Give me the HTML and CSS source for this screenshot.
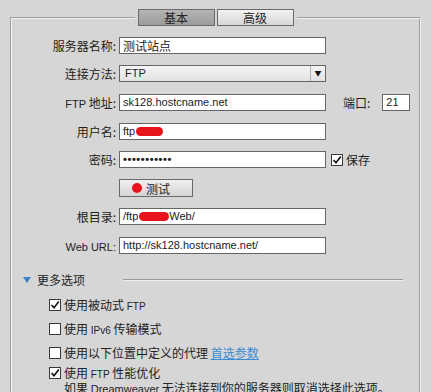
FILE: index.html
```html
<!DOCTYPE html>
<html lang="zh-CN">
<head>
  <meta charset="UTF-8">
  <title>站点设置 - 服务器</title>
  <link rel="stylesheet" href="styles.css">
</head>

<body>

  <fieldset class="panel">
    <legend class="tabs">
      <span class="tab active">基本</span>
      <span class="tab">高级</span>
    </legend>

    <div class="form">
      <div class="row">
        <label class="label">服务器名称:</label>
        <div class="field">测试站点</div>
      </div>

      <div class="row">
        <label class="label">连接方法:</label>
        <div class="field select">
          <span class="en">FTP</span>
          <span class="arrow">&#9660;</span>
        </div>
      </div>

      <div class="row">
        <label class="label"><span class="en">FTP</span> 地址:</label>
        <div class="field en">sk128.hostcname.net</div>
        <label class="port-label">端口:</label>
        <div class="field port en">21</div>
      </div>

      <div class="row">
        <label class="label">用户名:</label>
        <div class="field en">ftp<span class="scribble user"></span></div>
      </div>

      <div class="row">
        <label class="label">密码:</label>
        <div class="field dots">&bull;&bull;&bull;&bull;&bull;&bull;&bull;&bull;&bull;&bull;&bull;</div>
        <span class="check on save">
          <svg width="10" height="10" viewBox="0 0 10 10"><path d="M1.5 5 L4 7.8 L8.8 1.5" fill="none" stroke="#111" stroke-width="1.6"/></svg>
        </span>
        <span class="save-text">保存</span>
      </div>

      <div class="row">
        <span class="label"></span>
        <button class="test-btn"><span class="dot"></span>测试</button>
      </div>

      <div class="row">
        <label class="label">根目录:</label>
        <div class="field en">/ftp<span class="scribble root"></span>Web/</div>
      </div>

      <div class="row">
        <label class="label"><span class="en">Web URL:</span></label>
        <div class="field en">http://sk128.hostcname.net/</div>
      </div>
    </div>

    <div class="more">
      <span class="tri"></span>
      <span class="more-text">更多选项</span>
      <span class="rule"></span>
    </div>

    <div class="options">
      <div class="opt">
        <span class="check on">
          <svg width="10" height="10" viewBox="0 0 10 10"><path d="M1.5 5 L4 7.8 L8.8 1.5" fill="none" stroke="#111" stroke-width="1.6"/></svg>
        </span>
        <span>使用被动式 <span class="en small">FTP</span></span>
      </div>
      <div class="opt">
        <span class="check"></span>
        <span>使用 <span class="en small">IPv6</span> 传输模式</span>
      </div>
      <div class="opt">
        <span class="check"></span>
        <span>使用以下位置中定义的代理 <a href="#" class="link">首选参数</a></span>
      </div>
      <div class="opt last">
        <span class="check on">
          <svg width="10" height="10" viewBox="0 0 10 10"><path d="M1.5 5 L4 7.8 L8.8 1.5" fill="none" stroke="#111" stroke-width="1.6"/></svg>
        </span>
        <span>使用 <span class="en small">FTP</span> 性能优化<br>如果 <span class="en">Dreamweaver</span> 无法连接到你的服务器则取消选择此选项。</span>
      </div>
    </div>
  </fieldset>

</body>
</html>
```

FILE: styles.css
```css
body {
  margin: 0;
  font-family: 'Noto Sans CJK SC', 'Liberation Sans', sans-serif;
  font-size: 12px;
  color: #222;
  background-color: #d6d6d6;
  height: 392px;
  overflow: hidden;
}

.en {
  font-family: 'Liberation Sans', sans-serif;
  font-size: 11px;
}

.en.small {
  font-size: 10px;
}

.panel {
  margin: 9px 10px 0;
  padding: 0;
  border: 2px groove #f2f2f2;
  min-width: 0;
  height: 420px;
}

.tabs {
  margin: 0 auto;
  padding: 0 3px;
  display: flex;
  gap: 2px;
}

.tab {
  width: 77px;
  height: 17px;
  box-sizing: border-box;
  border: 1px solid #6a6a6a;
  background: linear-gradient(#f2f2f2, #d8d8d8);
  text-align: center;
  line-height: 15px;
}

.tab.active {
  background: linear-gradient(#b4b4b4, #9c9c9c);
}

.form {
  padding-top: 5px;
}

.row {
  display: flex;
  align-items: center;
  height: 28.6px;
}

.label {
  width: 104px;
  margin-right: 3px;
  text-align: right;
  white-space: nowrap;
}

.field {
  width: 207px;
  height: 17px;
  box-sizing: border-box;
  border: 1px solid #666;
  background: white;
  padding: 0 3px;
  line-height: 15px;
  white-space: nowrap;
  display: flex;
  align-items: center;
}

.select {
  background: linear-gradient(#f4f4f4, #e2e2e2);
  padding-left: 5px;
  position: relative;
}

.select .arrow {
  margin-left: auto;
  width: 14px;
  height: 15px;
  margin-right: -3px;
  border-left: 1px solid #b0b0b0;
  font-size: 7px;
  text-align: center;
  line-height: 15px;
  color: #111;
}

.port-label {
  margin-left: 17px;
  margin-right: 12px;
}

.field.port {
  width: 28px;
}

.dots {
  font-family: 'Liberation Sans', sans-serif;
  font-size: 11px;
  letter-spacing: 0.6px;
  font-weight: bold;
}

.scribble {
  display: inline-block;
  height: 9px;
  background: #e8141c;
  border-radius: 5px;
  vertical-align: middle;
}

.scribble.user {
  width: 27px;
  margin-left: 1px;
}

.scribble.root {
  width: 30px;
  margin-left: 1px;
}

.check {
  width: 12px;
  height: 12px;
  box-sizing: border-box;
  border: 1px solid #3a3a3a;
  background: white;
  display: inline-flex;
  align-items: center;
  justify-content: center;
  flex-shrink: 0;
}

.save {
  margin-left: 5px;
  margin-right: 3px;
}

.test-btn {
  width: 74px;
  height: 18px;
  padding: 0 0 0 12px;
  border: 1px solid #6a6a6a;
  background: linear-gradient(#f0f0f0, #d4d4d4);
  font-family: 'Noto Sans CJK SC', sans-serif;
  font-size: 12px;
  color: #222;
  display: flex;
  align-items: center;
  gap: 4px;
}

.dot {
  width: 10px;
  height: 10px;
  border-radius: 50%;
  background: #e8141c;
}

.more {
  display: flex;
  align-items: center;
  height: 20px;
  margin-top: 10px;
  padding-left: 11px;
}

.tri {
  width: 0;
  height: 0;
  border-left: 4px solid transparent;
  border-right: 4px solid transparent;
  border-top: 6px solid #3d7fc4;
  margin-right: 6px;
}

.rule {
  flex: 1;
  height: 1px;
  background: #9a9a9a;
  box-shadow: 0 1px 0 #eee;
  margin-left: 38px;
  margin-right: 16px;
}

.options {
  padding-left: 37px;
  margin-top: 3px;
}

.opt {
  display: flex;
  align-items: center;
  gap: 3px;
  height: 24px;
}

.opt.last {
  align-items: flex-start;
  height: auto;
  margin-top: 1px;
  line-height: 13px;
}

.opt.last .check {
  margin-top: 1px;
}

.link {
  color: #3a8ad4;
  text-decoration: underline;
}
```
